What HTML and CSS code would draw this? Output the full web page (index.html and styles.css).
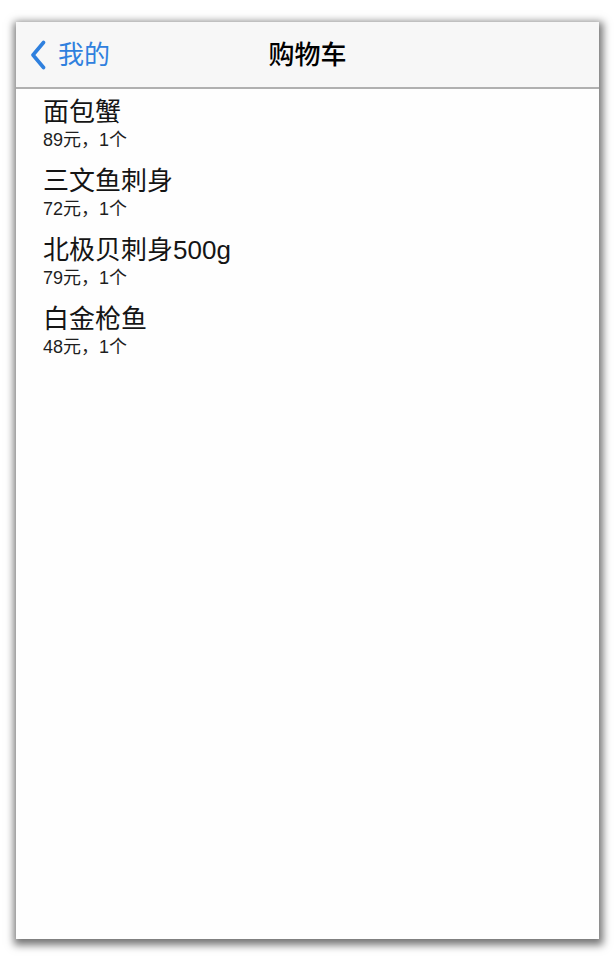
FILE: index.html
```html
<!DOCTYPE html>
<html lang="zh">
<head>
<meta charset="utf-8">
<title>购物车</title>
<link rel="stylesheet" href="styles.css">
</head>
<body>
<div class="screen">
  <header class="navbar">
    <a class="back">
      <svg class="chev" width="16" height="30" viewBox="0 0 16 30"><polyline points="13.5,2.5 3,15 13.5,27.5" fill="none" stroke="#2f80de" stroke-width="3.6" stroke-linecap="round" stroke-linejoin="round"/></svg>
      <span class="back-label">我的</span>
    </a>
    <h1 class="title">购物车</h1>
  </header>
  <ul class="list">
    <li class="item"><div class="name">面包蟹</div><div class="meta">89元，1个</div></li>
    <li class="item"><div class="name">三文鱼刺身</div><div class="meta">72元，1个</div></li>
    <li class="item"><div class="name">北极贝刺身500g</div><div class="meta">79元，1个</div></li>
    <li class="item"><div class="name">白金枪鱼</div><div class="meta">48元，1个</div></li>
  </ul>
</div>
</body>
</html>
```
FILE: styles.css
```css
html, body {
  margin: 0;
  padding: 0;
  background: #ffffff;
}
body {
  font-family: "Liberation Sans", "Noto Sans CJK SC", sans-serif;
  width: 614px;
  height: 956px;
  overflow: hidden;
}
.screen {
  margin: 22px 0 0 16px;
  width: 583px;
  height: 917px;
  background: #fefefe;
  box-shadow: 1px 3px 8px 3px rgba(0, 0, 0, 0.55);
  display: flex;
  flex-direction: column;
}
.navbar {
  position: relative;
  height: 65px;
  background: #f7f7f7;
  border-bottom: 2px solid #b0b0b0;
  display: flex;
  align-items: center;
  justify-content: center;
  flex-shrink: 0;
}
.back {
  position: absolute;
  left: 14px;
  top: 0;
  height: 65px;
  display: flex;
  align-items: center;
  gap: 12px;
  color: #2f80de;
}
.chev {
  display: block;
  margin-top: 1px;
}
.back-label {
  font-size: 26px;
  line-height: 30px;
}
.title {
  margin: 0;
  font-size: 26px;
  line-height: 30px;
  font-weight: 500;
  color: #000;
}
.list {
  list-style: none;
  margin: 0;
  padding: 8px 0 0 27px;
}
.item {
  padding-bottom: 15px;
}
.name {
  font-size: 26px;
  line-height: 30px;
  color: #151515;
}
.meta {
  margin-top: 2px;
  font-size: 18px;
  line-height: 22px;
  color: #1e1e1e;
}
```
